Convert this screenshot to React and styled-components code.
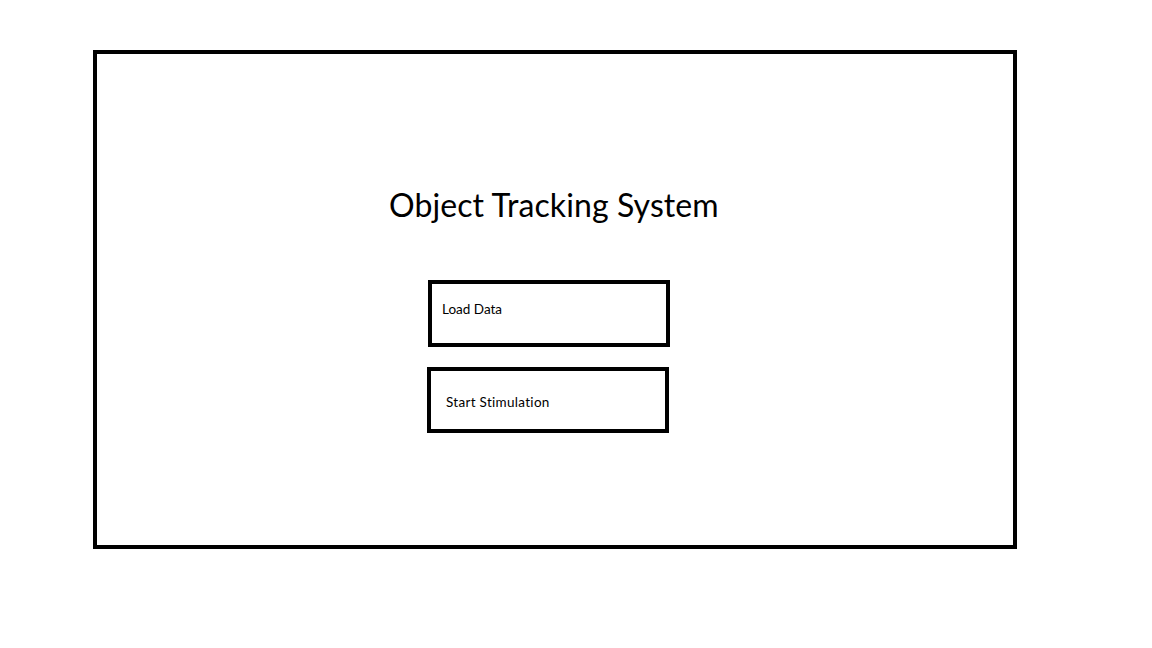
import React from "react";
import styled, { createGlobalStyle } from "styled-components";

const Global = createGlobalStyle`
  html, body { margin: 0; padding: 0; background: #fff; }
  body { font-family: "Lato", "Open Sans", sans-serif; color: #000; }
`;

const Page = styled.div`
  width: 1152px;
  height: 648px;
  padding: 50px 0 0 93px;
  box-sizing: border-box;
`;

const Frame = styled.div`
  width: 924px;
  height: 499px;
  box-sizing: border-box;
  border: 4px solid #000;
  display: flex;
  flex-direction: column;
  align-items: flex-start;
  padding-top: 131px;
`;

const Title = styled.h1`
  margin: 0 0 0 292px;
  font-family: "Lato", sans-serif;
  font-weight: 400;
  font-size: 32px;
  letter-spacing: 0.1px;
  line-height: 40px;
  white-space: nowrap;
`;

const ActionButton = styled.button`
  box-sizing: border-box;
  width: 242px;
  height: ${p => p.$h}px;
  margin: ${p => p.$top}px 0 0 ${p => p.$left}px;
  border: 4px solid #000;
  background: #fff;
  padding: 0 0 0 ${p => p.$padX}px;
  display: flex;
  align-items: flex-start;
  font-family: "Lato", sans-serif;
  font-size: 13.5px;
  color: #000;
  cursor: pointer;
`;

const Label = styled.span`
  display: block;
  line-height: 16px;
  margin-top: ${p => p.$offset}px;
  letter-spacing: ${p => p.$spacing || 0}px;
`;

export default function App() {
  return (
    <>
      <Global />
      <Page>
        <Frame>
          <Title>Object Tracking System</Title>
          <ActionButton $h={67} $top={55} $left={331} $padX={10}>
            <Label $offset={17}>Load Data</Label>
          </ActionButton>
          <ActionButton $h={66} $top={20} $left={330} $padX={15}>
            <Label $offset={23} $spacing={0.3}>Start Stimulation</Label>
          </ActionButton>
        </Frame>
      </Page>
    </>
  );
}
